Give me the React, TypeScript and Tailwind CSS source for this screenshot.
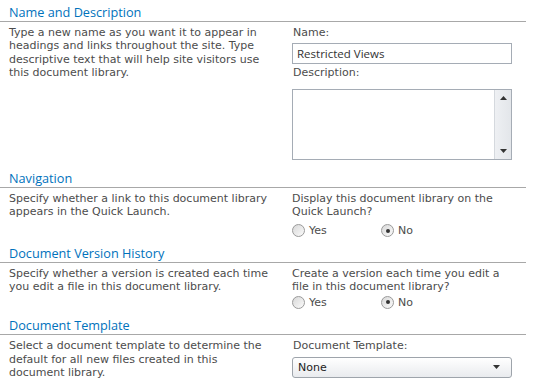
import React from 'react';

const body = "font-['DejaVu_Sans',Verdana,sans-serif] text-[11px] leading-[13.4px] text-[#4c4c4c]";

const Heading: React.FC<{ title: string; top: string }> = ({ title, top }) => (
  <div
    className={`${top} w-[526px] border-b border-[#a8a8a8] pb-[1px] pl-[9px] font-['Open_Sans',sans-serif] text-[12.7px] leading-[16px] text-[#0072bc]`}
  >
    {title}
  </div>
);

const Radio: React.FC<{ label: string; checked?: boolean }> = ({ label, checked }) => (
  <label className="flex items-center">
    <span className="flex h-[13px] w-[13px] items-center justify-center rounded-full border border-[#9a9a9a] bg-gradient-to-br from-[#d8d8d8] to-[#fbfbfb]">
      {checked && <span className="h-[4px] w-[4px] rounded-full bg-[#333]" />}
    </span>
    <span className="ml-[4px]">{label}</span>
  </label>
);

const RadioRow: React.FC<{ mt: string }> = ({ mt }) => (
  <div className={`${mt} flex h-[14px] items-center`}>
    <div className="w-[89px]">
      <Radio label="Yes" />
    </div>
    <Radio label="No" checked />
  </div>
);

const Row: React.FC<{ left: React.ReactNode; right: React.ReactNode }> = ({ left, right }) => (
  <div className={`grid grid-cols-[292px_220px] pt-[4px] ${body}`}>
    <div className="pl-[9px] pr-[16px]">{left}</div>
    <div>{right}</div>
  </div>
);

export default function App() {
  return (
    <div className="h-[387px] w-[535px] overflow-hidden bg-white">
      <Heading title="Name and Description" top="pt-[4px]" />
      <Row
        left={
          <p>
            Type a new name as you want it to appear in headings and links throughout the site. Type
            descriptive text that will help site visitors use this document library.
          </p>
        }
        right={
          <div>
            <div className="pl-[1px]">Name:</div>
            <div className="mt-[4px] flex h-[21px] w-[220px] items-center border border-[#a5acb5] px-[4px] font-['Open_Sans',sans-serif] text-[11.5px] text-[#333]">
              Restricted Views
            </div>
            <div className="mt-[2px] pl-[1px]">Description:</div>
            <div className="mt-[9px] flex h-[71px] w-[220px] border border-[#a5acb5]">
              <div className="flex-1" />
              <div className="flex w-[17px] flex-col items-center justify-between border-l border-[#d5d9de] bg-gradient-to-r from-[#eef0f3] to-[#e3e6ea] py-[6px]">
                <svg width="7" height="4" viewBox="0 0 7 4">
                  <path d="M3.5 0L7 4H0z" fill="#333" />
                </svg>
                <svg width="7" height="4" viewBox="0 0 7 4">
                  <path d="M0 0h7L3.5 4z" fill="#333" />
                </svg>
              </div>
            </div>
          </div>
        }
      />

      <Heading title="Navigation" top="pt-[10px]" />
      <Row
        left={<p>Specify whether a link to this document library appears in the Quick Launch.</p>}
        right={
          <div>
            <p>Display this document library on the Quick Launch?</p>
            <RadioRow mt="mt-[5px]" />
          </div>
        }
      />

      <Heading title="Document Version History" top="pt-[7px]" />
      <Row
        left={<p>Specify whether a version is created each time you edit a file in this document library.</p>}
        right={
          <div>
            <p>Create a version each time you edit a file in this document library?</p>
            <RadioRow mt="mt-[2px]" />
          </div>
        }
      />

      <Heading title="Document Template" top="pt-[8px]" />
      <Row
        left={<p>Select a document template to determine the default for all new files created in this document library.</p>}
        right={
          <div>
            <p className="pl-[1px]">Document Template:</p>
            <div className="mt-[4px] flex h-[21px] w-[220px] items-center justify-between rounded-[3px] border border-[#9ea4ab] bg-gradient-to-b from-[#ffffff] to-[#e9ebee] pl-[5px] pr-[11px] text-[#222]">
              <span>None</span>
              <svg width="7" height="4" viewBox="0 0 7 4">
                <path d="M0 0h7L3.5 4z" fill="#333" />
              </svg>
            </div>
          </div>
        }
      />
    </div>
  );
}
